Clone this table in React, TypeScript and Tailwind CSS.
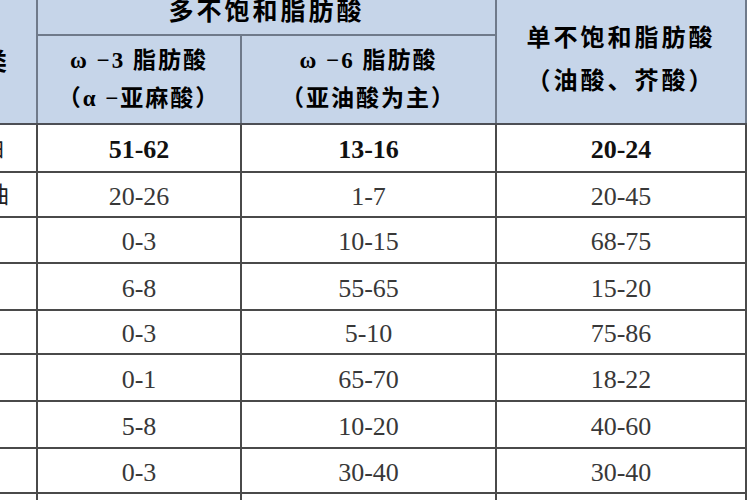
const serif = { fontFamily: '"Liberation Serif", "Noto Sans CJK SC", serif' };

interface Row {
  name: string;
  pad: string;
  cells: string[];
  h: string;
  bold?: boolean;
}

const rows: Row[] = [
  { name: "亚麻籽油", pad: "pr-[32px]", cells: ["51-62", "13-16", "20-24"], h: "h-[48px]", bold: true },
  { name: "菜籽油", pad: "pr-[27px]", cells: ["20-26", "1-7", "20-45"], h: "h-[45px]" },
  { name: "花生油", pad: "pr-[60px]", cells: ["0-3", "10-15", "68-75"], h: "h-[46px]" },
  { name: "玉米油", pad: "pr-[60px]", cells: ["6-8", "55-65", "15-20"], h: "h-[47px]" },
  { name: "橄榄油", pad: "pr-[60px]", cells: ["0-3", "5-10", "75-86"], h: "h-[43px]" },
  { name: "葵花籽油", pad: "pr-[60px]", cells: ["0-1", "65-70", "18-22"], h: "h-[47px]" },
  { name: "大豆油", pad: "pr-[60px]", cells: ["5-8", "10-20", "40-60"], h: "h-[47px]" },
  { name: "芝麻油", pad: "pr-[60px]", cells: ["0-3", "30-40", "30-40"], h: "h-[45px]" },
  { name: "", pad: "pr-[60px]", cells: ["", "", ""], h: "h-[45px]" },
];

export default function App() {
  return (
    <div className="w-[750px] h-[500px] overflow-hidden bg-white" style={serif}>
      <table className="border-collapse table-fixed w-[746px]">
        <colgroup>
          <col className="w-[37px]" />
          <col className="w-[204px]" />
          <col className="w-[255px]" />
          <col className="w-[250px]" />
        </colgroup>
        <thead className="bg-[#c6d5e9] text-black font-bold">
          <tr className="h-[35px]">
            <th rowSpan={2} className="border-r-2 border-b-2 border-r-[#6f7a8a] border-b-[#4d4f55] p-0 overflow-hidden">
              <div className="flex justify-end pr-[29px] text-[24px] whitespace-nowrap">种类</div>
            </th>
            <th colSpan={2} className="border-2 border-t-0 border-[#6f7a8a] p-0 align-top">
              <div className="text-[25px] tracking-[3px] leading-[28px] -mt-[2px]">多不饱和脂肪酸</div>
            </th>
            <th rowSpan={2} className="border-l-2 border-r-2 border-b-2 border-l-[#6f7a8a] border-r-[#6f7a8a] border-b-[#4d4f55] p-0">
              <div className="text-[24px] tracking-[3px] leading-[43px] pb-[4px]">
                <div>单不饱和脂肪酸</div>
                <div>（油酸、芥酸）</div>
              </div>
            </th>
          </tr>
          <tr className="h-[89px]">
            <th className="border-2 border-[#6f7a8a] border-b-[#4d4f55] p-0">
              <div className="text-[23px] tracking-[2px] leading-[38px]">
                <div>ω −3 脂肪酸</div>
                <div>（α −亚麻酸）</div>
              </div>
            </th>
            <th className="border-2 border-[#6f7a8a] border-b-[#4d4f55] p-0">
              <div className="text-[23px] tracking-[2px] leading-[38px]">
                <div>ω −6 脂肪酸</div>
                <div>（亚油酸为主）</div>
              </div>
            </th>
          </tr>
        </thead>
        <tbody>
          {rows.map((row, i) => (
            <tr key={i} className={row.h}>
              <td className="border-2 border-l-0 border-[#4a4a4a] p-0 overflow-hidden">
                <div className={`flex justify-end whitespace-nowrap text-[23px] text-[#222] pt-[3px] ${row.pad}`}>{row.name}</div>
              </td>
              {row.cells.map((cell, j) => (
                <td
                  key={j}
                  className={`border-2 border-[#4a4a4a] p-0 pt-[3px] text-center text-[26px] ${row.bold ? "font-bold text-[#111]" : "text-[#383838]"}`}
                >
                  {cell}
                </td>
              ))}
            </tr>
          ))}
        </tbody>
      </table>
    </div>
  );
}
